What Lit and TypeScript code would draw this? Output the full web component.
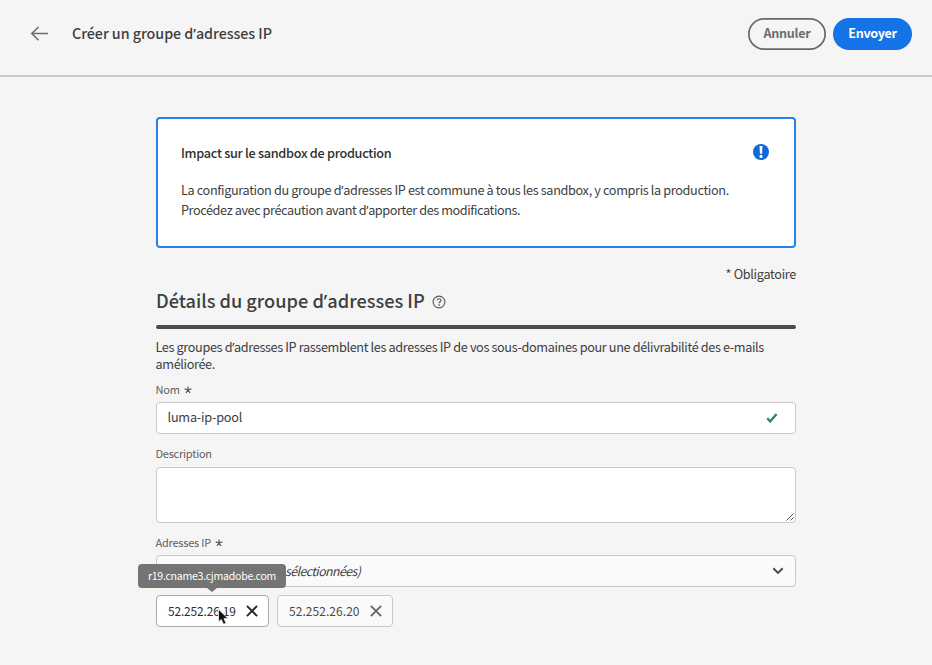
import { LitElement, html, css } from "lit";
import { customElement } from "lit/decorators.js";

const asterisk = html`<svg class="star" width="8" height="8" viewBox="0 0 8 8">
  <path d="M4 .4V4M4 4L.6 2.9M4 4l3.4-1.1M4 4L1.9 7M4 4l2.1 3" fill="none" stroke="#5a5a5a" stroke-width="1.3"/></svg>`;

const cross = (color: string) => html`<svg class="cross" width="14" height="14" viewBox="0 0 14 14">
  <path d="M1.9 1.9l10.2 10.2M12.1 1.9L1.9 12.1" fill="none" stroke=${color} stroke-width="2"/></svg>`;

const apos = html`<span class="apos">’</span>`;

@customElement("app-root")
export class AppRoot extends LitElement {
  static styles = css`
    :host { display: block; height: 665px; overflow: hidden; background: #f5f5f5; color: #3e3e3e;
      font-family: "Noto Sans CJK SC", "Noto Sans", sans-serif; font-size: 12.7px; line-height: 20px; }
    * { box-sizing: border-box; }
    svg { display: block; flex: none; }
    .t { white-space: nowrap; display: block; width: max-content; }
    .apos { font-family: "Noto Sans", sans-serif; line-height: 1; }
    header { height: 77px; border-bottom: 2px solid #cacaca; display: flex; align-items: flex-start; padding: 18px 20px 0 30px; }
    .back { margin-top: 8px; }
    .title { font-size: 14.3px; font-weight: 500; letter-spacing: -.05px; margin: 5px auto 0 24px; }
    .btn { height: 32px; border-radius: 16px; display: flex; align-items: center; justify-content: center; border: 0;
      font: inherit; font-size: 12.6px; letter-spacing: -.3px; font-weight: 700; background: transparent; color: #6e6e6e; padding: 0 0 2px; }
    .cancel { width: 78px; margin-right: 7px; box-shadow: inset 0 0 0 1.7px #686868; }
    .send { width: 79px; background: #1473e6; color: #fff; }
    main { width: 640px; margin-left: 156px; padding-top: 40px; }
    .alert { height: 131px; border: 2px solid #2680eb; border-radius: 4px; background: #fff; padding: 24px 25px 0 23px;
      display: flex; justify-content: space-between; }
    .alert h2 { font-size: inherit; letter-spacing: -.3px; font-weight: 500; margin: 0 0 17px; color: #2f2f2f; }
    .info { margin-top: 1px; }
    .p1 { letter-spacing: -.36px; }
    .p2 { letter-spacing: -.42px; }
    .required { margin: 16px 0 0 auto; letter-spacing: -.32px; }
    .heading { display: flex; align-items: center; height: 30px; margin-top: 2px; }
    .heading h1 { font-size: 18.2px; line-height: 30px; font-weight: 500; margin: -3px 0 0; }
    .help { margin: 2px 0 0 7px; }
    .rule { height: 4px; border-radius: 2px; background: #4b4b4b; margin: 9px 0; }
    .intro { line-height: 17px; letter-spacing: -.365px; margin: 0 0 0 -.5px; padding-bottom: 1px; }
    .label { display: flex; align-items: center; gap: 4px; font-size: 11px; height: 18px; line-height: 18px; color: #5e5e5e; letter-spacing: -.23px; }
    .label .t { margin-left: -.5px; }
    .star { margin-top: 1px; }
    .l1 { margin-top: 7px; }
    .l2, .l3 { margin-top: 10px; }
    .field { height: 32px; border: 1px solid #c8c8c8; border-radius: 4px; background: #fff; margin-top: 4px; padding: 0 17px 0 11px;
      display: flex; align-items: center; justify-content: space-between; }
    .value { letter-spacing: -.22px; margin: -2px 0 0 -.5px; }
    .area { height: 56px; margin-top: 5px; padding: 0 1px 1px 0; align-items: flex-end; justify-content: flex-end; }
    .select { background: #fafafa; padding: 0 11px 0 128px; }
    .italic { font-style: italic; font-size: 12.3px; letter-spacing: -.55px; }
    .chips { display: flex; gap: 8px; margin-top: 8px; }
    .chip { height: 32px; border: 1px solid #c8c8c8; border-radius: 4px; background: #fafafa; display: flex; align-items: center;
      justify-content: space-between; padding: 0 9px 0 11px; position: relative; color: #4b4b4b; font-size: 12px; }
    .active { width: 113px; background: #fff; border-color: #aaa; color: #2f2f2f; letter-spacing: -.18px; }
    .second { width: 116px; letter-spacing: .05px; }
    .tip { position: absolute; left: -19px; top: -32px; width: 148px; height: 24px; border-radius: 4px; background: #747474;
      color: #fff; font-size: 10.6px; letter-spacing: -.28px; line-height: 24px; display: flex; justify-content: center; }
    .tip::after { content: ""; position: absolute; left: 69px; top: 24px; border: 5px solid transparent; border-top: 4px solid #747474; border-bottom: 0; }
    .pointer { position: absolute; left: 60px; top: 12px; }
  `;

  render() {
    return html`
      <header>
        <svg class="back" width="18" height="16" viewBox="0 0 18 16"><path d="M18 7.5H2M8.6 1L1.8 7.5l6.8 6.7" fill="none" stroke="#6e6e6e" stroke-width="1.6"/></svg>
        <span class="title t">Créer un groupe d${apos}adresses IP</span>
        <button class="btn cancel"><span class="t">Annuler</span></button>
        <button class="btn send"><span class="t">Envoyer</span></button>
      </header>
      <main>
        <section class="alert">
          <div>
            <h2 class="t">Impact sur le sandbox de production</h2>
            <span class="t p1">La configuration du groupe d${apos}adresses IP est commune à tous les sandbox, y compris la production.</span>
            <span class="t p2">Procédez avec précaution avant d${apos}apporter des modifications.</span>
          </div>
          <svg class="info" width="16" height="16" viewBox="0 0 16 16"><circle cx="8" cy="8" r="8" fill="#1268d6"/><path d="M6.5 2h3L9.1 9.8H6.9z" fill="#fff"/><circle cx="8" cy="12.4" r="1.6" fill="#fff"/></svg>
        </section>
        <span class="required t">* Obligatoire</span>
        <div class="heading"><h1 class="t">Détails du groupe d${apos}adresses IP</h1>
          <svg class="help" width="14" height="14" viewBox="0 0 14 14"><circle cx="7" cy="7" r="5.9" fill="none" stroke="#5a5a5a" stroke-width="1.1"/><path d="M5.2 5.4c.1-2.2 3.7-2.2 3.7-.1 0 1.4-1.8 1.4-1.8 2.9" fill="none" stroke="#5a5a5a" stroke-width="1.2"/><circle cx="7.1" cy="10" r=".85" fill="#5a5a5a"/></svg>
        </div>
        <div class="rule"></div>
        <p class="intro">Les groupes d${apos}adresses IP rassemblent les adresses IP de vos sous-domaines pour une délivrabilité des e-mails améliorée.</p>
        <div class="label l1"><span class="t">Nom</span>${asterisk}</div>
        <div class="field"><span class="t value">luma-ip-pool</span>
          <svg class="check" width="12" height="10" viewBox="0 0 12 10"><path d="M1.2 5.2l3 3.2L10.6 1" fill="none" stroke="#268e6c" stroke-width="2.4"/></svg></div>
        <div class="label l2"><span class="t">Description</span></div>
        <div class="field area"><svg width="8" height="8" viewBox="0 0 8 8"><path d="M.5 7.5l7-7M4.5 7.5l3-3" stroke="#555" fill="none"/></svg></div>
        <div class="label l3"><span class="t">Adresses IP</span>${asterisk}</div>
        <div class="field select"><span class="t italic">sélectionnées)</span>
          <svg width="12" height="8" viewBox="0 0 12 8"><path d="M1.3 1.2L6 5.9l4.7-4.7" fill="none" stroke="#4b4b4b" stroke-width="2"/></svg></div>
        <div class="chips">
          <div class="chip active"><span class="t">52.252.26.19</span>${cross("#2c2c2c")}
            <div class="tip"><span class="t">r19.cname3.cjmadobe.com</span></div>
            <svg class="pointer" width="14" height="20" viewBox="0 0 14 20"><path d="M1.5 1.2v12.6l2.8-2.3 2.2 4.8 2.6-1.1-2.2-4.6h4.2z" fill="#111" stroke="#f4f4f4" stroke-width=".8"/></svg>
          </div>
          <div class="chip second"><span class="t">52.252.26.20</span>${cross("#6a6a6a")}</div>
        </div>
      </main>`;
  }
}
